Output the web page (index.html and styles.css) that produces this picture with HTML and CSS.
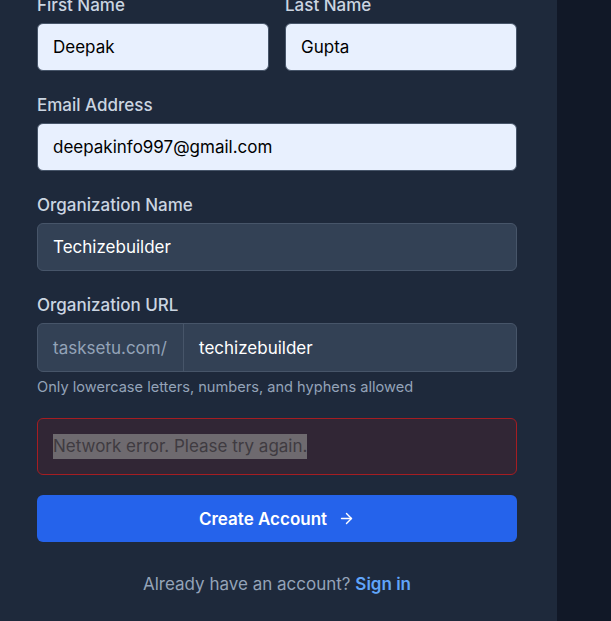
FILE: index.html
```html
<!DOCTYPE html>
<html>
<head>
<meta charset="utf-8">
<link rel="stylesheet" href="styles.css">
</head>
<body>
<div class="page">
  <div class="panel">
    <form class="form">
      <div class="row2">
        <div class="field">
          <label class="label">First Name</label>
          <div class="input autofill">Deepak</div>
        </div>
        <div class="field">
          <label class="label">Last Name</label>
          <div class="input autofill">Gupta</div>
        </div>
      </div>
      <div class="field">
        <label class="label">Email Address</label>
        <div class="input autofill">deepakinfo997@gmail.com</div>
      </div>
      <div class="field">
        <label class="label">Organization Name</label>
        <div class="input dark">Techizebuilder</div>
      </div>
      <div class="field">
        <label class="label">Organization URL</label>
        <div class="urlgroup">
          <span class="prefix">tasksetu.com/</span>
          <span class="urlinput">techizebuilder</span>
        </div>
        <p class="help">Only lowercase letters, numbers, and hyphens allowed</p>
      </div>
      <div class="error"><span class="sel">Network error. Please try again.</span></div>
      <div class="btn">
        <span>Create Account</span>
        <svg width="17" height="17" viewBox="0 0 24 24" fill="none" stroke="currentColor" stroke-width="2" stroke-linecap="round" stroke-linejoin="round"><path d="M5 12h14"/><path d="M12 5l7 7-7 7"/></svg>
      </div>
      <p class="signin">Already have an account? <a class="link">Sign in</a></p>
    </form>
  </div>
  <div class="side"></div>
</div>
</body>
</html>
```
FILE: styles.css
```css
* { box-sizing: border-box; }
html, body { margin: 0; padding: 0; height: 100%; overflow: hidden; }
body {
  font-family: Inter, "Noto Sans", sans-serif;
  background: #0f172a;
  color: #cbd5e1;
}
.page {
  display: flex;
  height: 100%;
}
.panel {
  width: 557px;
  background: #1e293b;
  padding-left: 37px;
  flex: none;
}
.side {
  flex: 1;
  background: #111827;
}
.form {
  width: 480px;
  margin: -7px 0 0 0;
  display: flex;
  flex-direction: column;
}
.row2 {
  display: grid;
  grid-template-columns: 1fr 1fr;
  gap: 16px;
  margin-bottom: 22px;
}
.field { display: flex; flex-direction: column; margin-bottom: 22px; }
.row2 .field { margin-bottom: 0; }
.label {
  font-size: 17px;
  line-height: 24px;
  font-weight: 500;
  color: #cbd5e1;
  margin-bottom: 6px;
}
.input {
  height: 48px;
  border-radius: 6px;
  border: 1px solid #475569;
  padding: 0 15px;
  display: flex;
  align-items: center;
  font-size: 17px;
}
.autofill { background: #e8f0fe; color: #000; }
.dark { background: #334155; color: #fff; }
.urlgroup {
  display: flex;
  height: 49px;
  border: 1px solid #475569;
  border-radius: 6px;
  background: #334155;
  overflow: hidden;
}
.prefix {
  width: 146px;
  display: flex;
  align-items: center;
  padding-left: 15px;
  color: #94a3b8;
  font-size: 17px;
  border-right: 1px solid #475569;
}
.urlinput {
  display: flex;
  align-items: center;
  padding-left: 15px;
  color: #fff;
  font-size: 17px;
}
.help {
  margin: 5px 0 0 0;
  font-size: 14.6px;
  line-height: 20px;
  color: #94a3b8;
}
.field:has(.help) { margin-bottom: 21px; }
.error {
  border: 1px solid #a51d22;
  background: rgba(127, 29, 29, 0.2);
  border-radius: 6px;
  padding: 15px;
  font-size: 17px;
  line-height: 24px;
  margin-bottom: 20px;
}
.sel {
  background: #6e6a6f;
  color: #3f3b41;
  display: inline-block;
  line-height: 25px;
}
.btn {
  height: 47px;
  background: #2563eb;
  border-radius: 6px;
  color: #fff;
  font-size: 17px;
  font-weight: 600;
  display: flex;
  align-items: center;
  justify-content: center;
  gap: 11px;
}
.signin {
  margin: 30px 0 0 0;
  text-align: center;
  font-size: 17px;
  line-height: 24px;
  color: #94a3b8;
}
.link { color: #60a5fa; font-weight: 600; }
```
